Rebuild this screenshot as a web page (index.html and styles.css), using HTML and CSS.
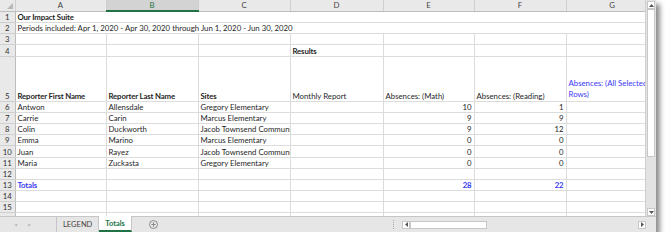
FILE: index.html
```html
<!DOCTYPE html>
<html lang="en">
<head>
    <meta charset="UTF-8">
    <title>Totals - Our Impact Suite</title>
    <link rel="stylesheet" href="styles.css">
</head>
<body>
    <div class="window">
        <div class="main">
            <div class="sheet">
                <table class="grid">
                    <colgroup>
                        <col class="col-rh">
                        <col class="col-a">
                        <col class="col-b">
                        <col class="col-c">
                        <col class="col-d">
                        <col class="col-e">
                        <col class="col-f">
                        <col class="col-g">
                    </colgroup>
                    <tr class="col-heads">
                        <th class="corner"><span class="corner-tri"></span></th>
                        <th>A</th>
                        <th class="selected">B</th>
                        <th>C</th>
                        <th>D</th>
                        <th>E</th>
                        <th>F</th>
                        <th>G</th>
                    </tr>
                    <tr>
                        <th class="rh">1</th>
                        <td colspan="7" class="bold">Our Impact Suite</td>
                    </tr>
                    <tr>
                        <th class="rh">2</th>
                        <td colspan="7">Periods included: Apr 1, 2020 - Apr 30, 2020 through Jun 1, 2020 - Jun 30, 2020</td>
                    </tr>
                    <tr>
                        <th class="rh">3</th>
                        <td></td><td></td><td></td><td></td><td></td><td></td><td></td>
                    </tr>
                    <tr>
                        <th class="rh">4</th>
                        <td></td><td></td><td></td><td class="bold">Results</td><td></td><td></td><td></td>
                    </tr>
                    <tr class="tall">
                        <th class="rh">5</th>
                        <td class="bold">Reporter First Name</td>
                        <td class="bold">Reporter Last Name</td>
                        <td class="bold">Sites</td>
                        <td>Monthly Report</td>
                        <td>Absences: (Math)</td>
                        <td>Absences: (Reading)</td>
                        <td class="blue wrap">Absences: (All Selected Rows)</td>
                    </tr>
                    <tr>
                        <th class="rh">6</th>
                        <td>Antwon</td><td>Allensdale</td><td>Gregory Elementary</td><td></td>
                        <td class="num">10</td><td class="num">1</td><td></td>
                    </tr>
                    <tr>
                        <th class="rh">7</th>
                        <td>Carrie</td><td>Carin</td><td>Marcus Elementary</td><td></td>
                        <td class="num">9</td><td class="num">9</td><td></td>
                    </tr>
                    <tr>
                        <th class="rh">8</th>
                        <td>Colin</td><td>Duckworth</td><td>Jacob Townsend Community</td><td></td>
                        <td class="num">9</td><td class="num">12</td><td></td>
                    </tr>
                    <tr>
                        <th class="rh">9</th>
                        <td>Emma</td><td>Marino</td><td>Marcus Elementary</td><td></td>
                        <td class="num">0</td><td class="num">0</td><td></td>
                    </tr>
                    <tr>
                        <th class="rh">10</th>
                        <td>Juan</td><td>Rayez</td><td>Jacob Townsend Community</td><td></td>
                        <td class="num">0</td><td class="num">0</td><td></td>
                    </tr>
                    <tr>
                        <th class="rh">11</th>
                        <td>Maria</td><td>Zuckasta</td><td>Gregory Elementary</td><td></td>
                        <td class="num">0</td><td class="num">0</td><td></td>
                    </tr>
                    <tr>
                        <th class="rh">12</th>
                        <td></td><td></td><td></td><td></td><td></td><td></td><td></td>
                    </tr>
                    <tr>
                        <th class="rh">13</th>
                        <td class="blue bold">Totals</td><td></td><td></td><td></td>
                        <td class="num blue bold">28</td><td class="num blue bold">22</td><td></td>
                    </tr>
                    <tr>
                        <th class="rh">14</th>
                        <td></td><td></td><td></td><td></td><td></td><td></td><td></td>
                    </tr>
                    <tr>
                        <th class="rh">15</th>
                        <td></td><td></td><td></td><td></td><td></td><td></td><td></td>
                    </tr>
                    <tr>
                        <th class="rh">16</th>
                        <td></td><td></td><td></td><td></td><td></td><td></td><td></td>
                    </tr>
                </table>
            </div>
            <div class="vscroll">
                <div class="sb-btn">
                    <svg width="5" height="3" viewBox="0 0 5 3"><path d="M0 3 L2.5 0 L5 3 Z" fill="#555"/></svg>
                </div>
                <div class="vthumb"></div>
                <div class="vtrack"></div>
                <div class="sb-btn">
                    <svg width="5" height="3" viewBox="0 0 5 3"><path d="M0 0 L2.5 3 L5 0 Z" fill="#555"/></svg>
                </div>
            </div>
        </div>
        <div class="tabbar">
            <div class="tab-nav">
                <span class="nav-arrow">&#9664;</span>
                <span class="nav-arrow">&#9654;</span>
            </div>
            <div class="tab">LEGEND</div>
            <div class="tab active">Totals</div>
            <div class="add-sheet">
                <svg width="9" height="9" viewBox="0 0 9 9">
                    <circle cx="4.5" cy="4.5" r="4" fill="none" stroke="#777" stroke-width="0.8"/>
                    <path d="M4.5 2.3 V6.7 M2.3 4.5 H6.7" stroke="#777" stroke-width="0.8"/>
                </svg>
            </div>
            <div class="tab-spacer"></div>
            <div class="split-dots"></div>
            <div class="hscroll">
                <div class="sb-btn">
                    <svg width="3" height="5" viewBox="0 0 3 5"><path d="M3 0 L0 2.5 L3 5 Z" fill="#555"/></svg>
                </div>
                <div class="hthumb"></div>
                <div class="htrack"></div>
                <div class="sb-btn">
                    <svg width="3" height="5" viewBox="0 0 3 5"><path d="M0 0 L3 2.5 L0 5 Z" fill="#555"/></svg>
                </div>
            </div>
        </div>
    </div>
</body>
</html>
```

FILE: styles.css
```css
body {
    margin: 0;
    background: #fff;
    font-family: Lato, "Open Sans", sans-serif;
    color: #1f1f1f;
}

.window {
    width: 656px;
    height: 232px;
    background: #fff;
    box-shadow: 4px 4px 5px rgba(0, 0, 0, 0.45);
    display: flex;
    flex-direction: column;
}

.main {
    display: flex;
    height: 216px;
}

.sheet {
    width: 645px;
    height: 216px;
    overflow: hidden;
}

.grid {
    border-collapse: collapse;
    table-layout: fixed;
    width: 658px;
    font-size: 7.8px;
}

.col-rh { width: 15px; }
.col-a { width: 91px; }
.col-b { width: 92px; }
.col-c { width: 92px; }
.col-d { width: 93px; }
.col-e { width: 91px; }
.col-f { width: 92px; }
.col-g { width: 92px; }

.grid tr {
    height: 11.2px;
}

.grid td,
.grid th {
    padding: 0 2px;
    height: 10px;
    line-height: 10px;
    border-right: 1px solid #dcdcdc;
    border-bottom: 1px solid #dcdcdc;
    white-space: nowrap;
    overflow: hidden;
    vertical-align: bottom;
    text-align: left;
}

.grid tr.col-heads {
    height: 11px;
}

.grid .col-heads th {
    background: #e9e9e9;
    color: #444;
    font-weight: normal;
    text-align: center;
    vertical-align: middle;
    border-right: 1px solid #cfcfcf;
    border-bottom: 1px solid #bdbdbd;
}

.grid .col-heads th.selected {
    background: #d3d3d3;
    color: #217346;
    border-bottom: 2px solid #217346;
}

.grid th.corner {
    position: relative;
    padding: 0;
}

.corner-tri {
    position: absolute;
    right: 2px;
    bottom: 2px;
    width: 0;
    height: 0;
    border-left: 6px solid transparent;
    border-bottom: 6px solid #b8b8b8;
}

.grid th.rh {
    background: #e9e9e9;
    color: #333;
    font-weight: normal;
    text-align: center;
    padding: 0;
    border-right: 1px solid #bdbdbd;
    border-bottom: 1px solid #cfcfcf;
}

.grid tr.tall {
    height: 45px;
}

.bold {
    font-weight: bold;
    letter-spacing: -0.15px;
}

.blue {
    color: #3838f5;
}

.num {
    text-align: right !important;
}

.grid td.wrap {
    white-space: normal;
    line-height: 11px;
    padding-bottom: 1px;
}

/* vertical scrollbar */
.vscroll {
    width: 11px;
    background: #e3e3e3;
    border-left: 1px solid #cfcfcf;
    display: flex;
    flex-direction: column;
    align-items: center;
    padding-top: 1px;
    box-sizing: border-box;
}

.sb-btn {
    width: 8px;
    height: 8px;
    background: #fff;
    border: 1px solid #c8c8c8;
    box-sizing: border-box;
    display: flex;
    align-items: center;
    justify-content: center;
}

.vthumb {
    width: 8px;
    height: 148px;
    background: #fff;
    border: 1px solid #c8c8c8;
    box-sizing: border-box;
}

.vtrack {
    flex: 1;
}

/* sheet tabs */
.tabbar {
    height: 16px;
    background: #e6e6e6;
    border-top: 1px solid #c6c6c6;
    box-sizing: border-box;
    display: flex;
    align-items: stretch;
    font-size: 7.5px;
    color: #444;
}

.tab-nav {
    width: 57px;
    display: flex;
    align-items: center;
    padding-left: 14px;
    gap: 11px;
    box-sizing: border-box;
    border-right: 1px solid #c6c6c6;
}

.nav-arrow {
    font-size: 4px;
    color: #bdbdbd;
}

.tab {
    padding: 0 6px;
    display: flex;
    align-items: center;
    border-right: 1px solid #c6c6c6;
}

.tab.active {
    background: #fff;
    color: #217346;
    font-weight: bold;
    border-bottom: 2px solid #217346;
    padding-top: 1px;
    margin-top: -1px;
}

.add-sheet {
    width: 44px;
    display: flex;
    align-items: center;
    justify-content: center;
}

.tab-spacer {
    flex: 1;
}

.split-dots {
    width: 1px;
    margin: 3px 7px 3px 0;
    border-left: 1px dotted #a8a8a8;
}

.hscroll {
    width: 254px;
    display: flex;
    align-items: center;
    gap: 0;
    padding-right: 10px;
    box-sizing: border-box;
}

.hthumb {
    width: 77px;
    height: 8px;
    background: #fff;
    border: 1px solid #c8c8c8;
    box-sizing: border-box;
}

.htrack {
    flex: 1;
}
```
